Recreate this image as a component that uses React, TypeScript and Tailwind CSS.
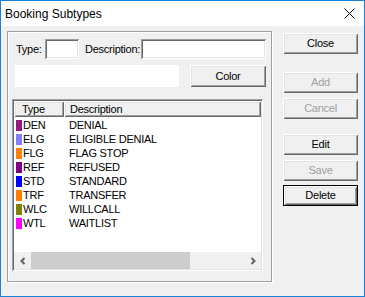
import React from "react";

const raised =
  "shadow-[inset_1px_1px_0_#ffffff,inset_-1px_-1px_0_#696969,inset_2px_2px_0_#e3e3e3,inset_-2px_-2px_0_#a0a0a0]";
const sunken =
  "shadow-[inset_1px_1px_0_#a0a0a0,inset_-1px_-1px_0_#ffffff,inset_2px_2px_0_#696969,inset_-2px_-2px_0_#e3e3e3]";

const rows = [
  { code: "DEN", desc: "DENIAL", color: "dither" },
  { code: "ELG", desc: "ELIGIBLE DENIAL", color: "#8080ff" },
  { code: "FLG", desc: "FLAG STOP", color: "#ff8000" },
  { code: "REF", desc: "REFUSED", color: "#800080" },
  { code: "STD", desc: "STANDARD", color: "#0000ff" },
  { code: "TRF", desc: "TRANSFER", color: "#ff8000" },
  { code: "WLC", desc: "WILLCALL", color: "#808000" },
  { code: "WTL", desc: "WAITLIST", color: "#ff00ff" },
];

const Swatch = ({ color }: { color: string }) => (
  <svg width="6" height="11" viewBox="0 0 6 11" className="ml-[2px] shrink-0">
    {color === "dither" ? (
      <>
        <defs>
          <pattern id="dith" width="2" height="2" patternUnits="userSpaceOnUse">
            <rect width="2" height="2" fill="#ff0000" />
            <rect x="1" y="0" width="1" height="1" fill="#3030ff" />
            <rect x="0" y="1" width="1" height="1" fill="#3030ff" />
          </pattern>
        </defs>
        <rect width="6" height="11" fill="url(#dith)" />
      </>
    ) : (
      <rect width="6" height="11" fill={color} />
    )}
  </svg>
);

const Button = ({
  label,
  disabled,
  isDefault,
  className = "",
}: {
  label: string;
  disabled?: boolean;
  isDefault?: boolean;
  className?: string;
}) => (
  <div
    className={`flex items-center justify-center bg-[#f0f0f0] ${
      isDefault ? "border border-black" : ""
    } ${className}`}
  >
    <div
      className={`flex h-full w-full items-center justify-center ${raised} ${
        disabled ? "text-[#a0a0a0]" : "text-black"
      }`}
    >
      {label}
    </div>
  </div>
);

const Chevron = ({ dir }: { dir: "left" | "right" }) => (
  <svg width="8" height="8" viewBox="0 0 8 8">
    <polyline
      points={dir === "left" ? "5.5,1 2.5,4 5.5,7" : "2.5,1 5.5,4 2.5,7"}
      fill="none"
      stroke="#606060"
      strokeWidth="2"
    />
  </svg>
);

const App = () => {
  return (
    <div
      className="flex h-[297px] w-[365px] flex-col border border-[#1883d7] bg-[#f0f0f0] text-[11px] tracking-[-0.25px] text-black"
      style={{ fontFamily: '"Liberation Sans", Arial, sans-serif' }}
    >
      {/* title bar */}
      <div className="flex h-[25px] items-center justify-between bg-white pl-[4px]">
        <span className="text-[12px] tracking-normal">Booking Subtypes</span>
        <svg width="11" height="11" viewBox="0 0 11 11" className="mr-[9px]">
          <path d="M0.5 0.5 L10.5 10.5 M10.5 0.5 L0.5 10.5" stroke="#000" strokeWidth="1" />
        </svg>
      </div>

      <div className="flex flex-1">
        {/* group box */}
        <div className="ml-[6px] mt-[5px] flex h-[251px] w-[265px] flex-col border border-[#a0a0a0] shadow-[inset_1px_1px_0_#ffffff,1px_1px_0_#ffffff]">
          <div className="ml-[8px] mt-[7px] flex h-[20px] items-center">
            <span className="w-[29px]">Type:</span>
            <div className={`h-[20px] w-[34px] bg-white ${sunken}`} />
            <span className="ml-[6px] w-[56px]">Description:</span>
            <div className={`h-[20px] w-[125px] bg-white ${sunken}`} />
          </div>

          <div className="ml-[7px] mt-[6px] flex h-[22px]">
            <div className="h-[22px] w-[164px] bg-white" />
            <Button label="Color" className="ml-[11px] h-[22px] w-[76px]" />
          </div>

          {/* list view */}
          <div className={`ml-[4px] mt-[12px] flex h-[172px] w-[251px] flex-col bg-white p-[2px] ${sunken}`}>
            <div className="flex h-[16px] bg-[#f0f0f0]">
              <div className={`flex w-[50px] items-center pl-[8px] ${raised}`}>Type</div>
              <div className={`flex flex-1 items-center pl-[6px] ${raised}`}>Description</div>
            </div>
            <div className="flex flex-1 flex-col pt-[1px]">
              {rows.map((r) => (
                <div key={r.code} className="flex h-[14px] items-center">
                  <Swatch color={r.color} />
                  <span className="w-[47px] pl-[1px]">{r.code}</span>
                  <span>{r.desc}</span>
                </div>
              ))}
            </div>
            <div className="flex h-[17px] bg-[#f0f0f0]">
              <div className="flex w-[17px] items-center justify-center">
                <Chevron dir="left" />
              </div>
              <div className="flex flex-1">
                <div className="w-[159px] bg-[#cdcdcd]" />
              </div>
              <div className="flex w-[17px] items-center justify-center">
                <Chevron dir="right" />
              </div>
            </div>
          </div>
        </div>

        {/* buttons */}
        <div className="ml-[11px] flex w-[75px] flex-col">
          <Button label="Close" className="mt-[7px] h-[21px]" />
          <Button label="Add" disabled className="mt-[18px] h-[21px]" />
          <Button label="Cancel" disabled className="mt-[5px] h-[21px]" />
          <Button label="Edit" className="mt-[15px] h-[21px]" />
          <Button label="Save" disabled className="mt-[5px] h-[21px]" />
          <Button label="Delete" isDefault className="mt-[4px] h-[21px]" />
        </div>
      </div>
    </div>
  );
};

export default App;
